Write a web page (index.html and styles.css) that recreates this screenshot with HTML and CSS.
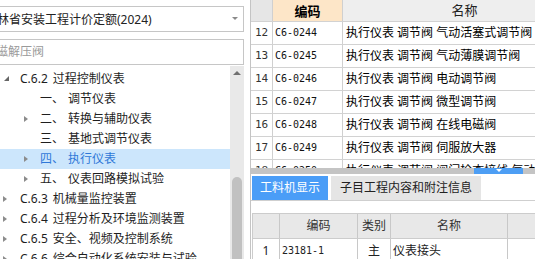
FILE: index.html
```html
<!DOCTYPE html>
<html>
<head>
    <meta charset="utf-8">
    <title>定额查询</title>
    <link rel="stylesheet" href="styles.css">
</head>
<body>
<div class="app">
    <aside class="side">
        <div class="combo">
            <span class="combo-text">吉林省安装工程计价定额(2024)</span>
            <span class="combo-arrow"></span>
        </div>
        <div class="search"><span class="ph">磁解压阀</span></div>
        <div class="tree-wrap">
            <ul class="tree">
                <li class="node top"><span class="tg open"></span><span class="code">C.6.2</span>过程控制仪表</li>
                <li class="node sub"><span class="tg"></span><span class="no">一、</span>调节仪表</li>
                <li class="node sub"><span class="tg shut"></span><span class="no">二、</span>转换与辅助仪表</li>
                <li class="node sub"><span class="tg"></span><span class="no">三、</span>基地式调节仪表</li>
                <li class="node sub sel"><span class="tg shut"></span><span class="no">四、</span>执行仪表</li>
                <li class="node sub"><span class="tg shut"></span><span class="no">五、</span>仪表回路模拟试验</li>
                <li class="node top"><span class="tg shut"></span><span class="code">C.6.3</span>机械量监控装置</li>
                <li class="node top"><span class="tg shut"></span><span class="code">C.6.4</span>过程分析及环境监测装置</li>
                <li class="node top"><span class="tg shut"></span><span class="code">C.6.5</span>安全、视频及控制系统</li>
                <li class="node top"><span class="tg shut"></span><span class="code">C.6.6</span>综合自动化系统安装与试验</li>
            </ul>
            <div class="vscroll">
                <span class="up"></span>
                <span class="thumb"></span>
            </div>
        </div>
    </aside>

    <main class="main">
        <div class="quota">
            <div class="qrow head">
                <div class="c num"></div>
                <div class="c qcode hot">编码</div>
                <div class="c qname">名称</div>
            </div>
            <div class="qrow"><div class="c num">12</div><div class="c qcode">C6-0244</div><div class="c qname">执行仪表 调节阀 气动活塞式调节阀</div></div>
            <div class="qrow"><div class="c num">13</div><div class="c qcode">C6-0245</div><div class="c qname">执行仪表 调节阀 气动薄膜调节阀</div></div>
            <div class="qrow"><div class="c num">14</div><div class="c qcode">C6-0246</div><div class="c qname">执行仪表 调节阀 电动调节阀</div></div>
            <div class="qrow"><div class="c num">15</div><div class="c qcode">C6-0247</div><div class="c qname">执行仪表 调节阀 微型调节阀</div></div>
            <div class="qrow"><div class="c num">16</div><div class="c qcode">C6-0248</div><div class="c qname">执行仪表 调节阀 在线电磁阀</div></div>
            <div class="qrow"><div class="c num">17</div><div class="c qcode">C6-0249</div><div class="c qname">执行仪表 调节阀 伺服放大器</div></div>
            <div class="qrow"><div class="c num">18</div><div class="c qcode">C6-0250</div><div class="c qname">执行仪表 调节阀 阀门检查接线 气动</div></div>
        </div>
        <div class="hscroll"><span class="hs-handle"></span></div>

        <div class="tabs">
            <span class="tab on">工料机显示</span>
            <span class="tab">子目工程内容和附注信息</span>
        </div>

        <div class="mats">
            <div class="mrow head">
                <div class="c"></div>
                <div class="c">编码</div>
                <div class="c">类别</div>
                <div class="c">名称</div>
                <div class="c">规格</div>
            </div>
            <div class="mrow">
                <div class="c mid">1</div>
                <div class="c mcode">23181-1</div>
                <div class="c mid">主</div>
                <div class="c">仪表接头</div>
                <div class="c"></div>
            </div>
        </div>
    </main>
</div>
</body>
</html>
```

FILE: styles.css
```css
* {box-sizing: border-box;}
body {margin: 0; background: #fff; color: #222; font: 12px/20px "Noto Sans", "Noto Sans CJK SC", sans-serif; overflow: hidden;}
.app {display: flex; width: 535px; height: 259px; overflow: hidden;}

/* left side: quota book + tree */
.side {width: 244px; margin-right: 6px; flex: none; overflow: hidden;}
.combo {
    position: relative;
    margin: 6px 0 0 -40px;
    width: 284px;
    height: 26px;
    border: 1px solid #c6c6c6;
    padding: 3px 0 0 24px;
    line-height: 20px;
    white-space: nowrap;}
.combo-arrow {
    position: absolute;
    right: 5px;
    top: 10px;
    border-top: 3px solid #8a8a8a;
    border-left: 3px solid transparent;
    border-right: 3px solid transparent;}
.search {
    margin: 7px 0 0 -40px;
    width: 284px;
    height: 26px;
    border: 1px solid #c6c6c6;
    padding: 2px 0 0 35px;
    white-space: nowrap;}
.search .ph {color: #9a9a9a;}

.tree-wrap {display: flex; margin-top: 1px; height: 194px;}
.tree {list-style: none; margin: 0; padding: 3px 0 0; width: 230px; flex: none;}
.node {display: flex; align-items: center; height: 20px; white-space: nowrap; color: #1e1e1e;}
.node.top {padding-left: 3px;}
.node.sub {padding-left: 24px;}
.node.sel {background: #cce6fc; color: #2f78d8;}
.tg {display: inline-block; width: 17px; height: 20px; position: relative; flex: none;}
.node.sub .tg {width: 16px;}
.tg.shut::before {
    content: "";
    position: absolute;
    left: 0;
    top: 7px;
    border-left: 4px solid #8c8c8c;
    border-top: 3px solid transparent;
    border-bottom: 3px solid transparent;}
.tg.open::before {
    content: "";
    position: absolute;
    left: 1px;
    top: 7px;
    border-bottom: 5px solid #666;
    border-left: 5px solid transparent;}
.code {margin-right: 5px;}
.no {width: 28px; flex: none;}

.vscroll {width: 14px; flex: none; background: #e9e9e9; position: relative;}
.vscroll .up {
    position: absolute;
    left: 3px;
    top: 5px;
    border-bottom: 4px solid #707070;
    border-left: 4px solid transparent;
    border-right: 4px solid transparent;}
.vscroll .thumb {
    position: absolute;
    left: 2px;
    top: 111px;
    width: 10px;
    height: 120px;
    border-radius: 5px 5px 0 0;
    background: #c1c1c1;}

/* right side: quota grid */
.main {flex: 1; border-left: 1px solid #c4c4c4; overflow: hidden; min-width: 0;}
.quota {height: 168px; overflow: hidden;}
.qrow {display: grid; grid-template-columns: 22px 70px 300px; height: 23px; border-bottom: 1px solid #d2d2d2;}
.qrow.head {height: 22px; font-size: 13px;}
.c {border-right: 1px solid #d0d0d0; white-space: nowrap; overflow: hidden;}
.qrow .c {line-height: 22px;}
.qrow.head .c {line-height: 21px;}
.num {text-align: center; font: 11px/22px "DejaVu Sans Mono", monospace; color: #333;}
.qrow.head .num {background: #e6e6e6;}
.qcode {padding-left: 2px; font: 10px/22px "DejaVu Sans Mono", monospace; color: #111;}
.qname {padding-left: 3px; color: #000;}
.qrow.head .qcode {background: #fde6c8; font: bold 13px/21px "Noto Sans CJK SC", sans-serif; text-align: center; padding: 0; color: #000;}
.qrow.head .qname {background: #eeeeee; text-align: center; padding: 0 56px 0 0; color: #222;}

.hscroll {position: relative; height: 6px; background: #c4c4c4;}
.hs-handle {position: absolute; left: 223px; top: 0; width: 49px; height: 6px; background: #4d9ef4;}
.hs-handle::after {
    content: "";
    position: absolute;
    left: 22px;
    top: 1px;
    border-top: 3px solid #fff;
    border-left: 3px solid transparent;
    border-right: 3px solid transparent;}

/* tabs + material grid */
.tabs {display: flex; margin-top: 2px; padding-left: 1px; height: 25px; border-bottom: 1px solid #cfcfcf;}
.tab {width: 150px; height: 24px; margin-left: 3px; background: #e5e5e5; color: #222; text-align: center; line-height: 24px;}
.tab.on {width: 76px; margin-left: 0; background: #4a9df7; color: #fff;}

.mats {margin: 12px 0 0 1px; border-top: 1px solid #cccccc; border-left: 1px solid #cccccc;}
.mrow {display: grid; grid-template-columns: 27px 78px 33px 117px 80px; height: 25px; border-bottom: 1px solid #cccccc;}
.mrow .c {border-right: 1px solid #c8c8c8; line-height: 23px; padding-left: 2px;}
.mrow.head .c {background: #e8e8e8; text-align: center; color: #333; padding: 0;}
.mrow .mid {text-align: center; padding: 0;}
.mcode {font: 10px/23px "DejaVu Sans Mono", monospace;}
```
